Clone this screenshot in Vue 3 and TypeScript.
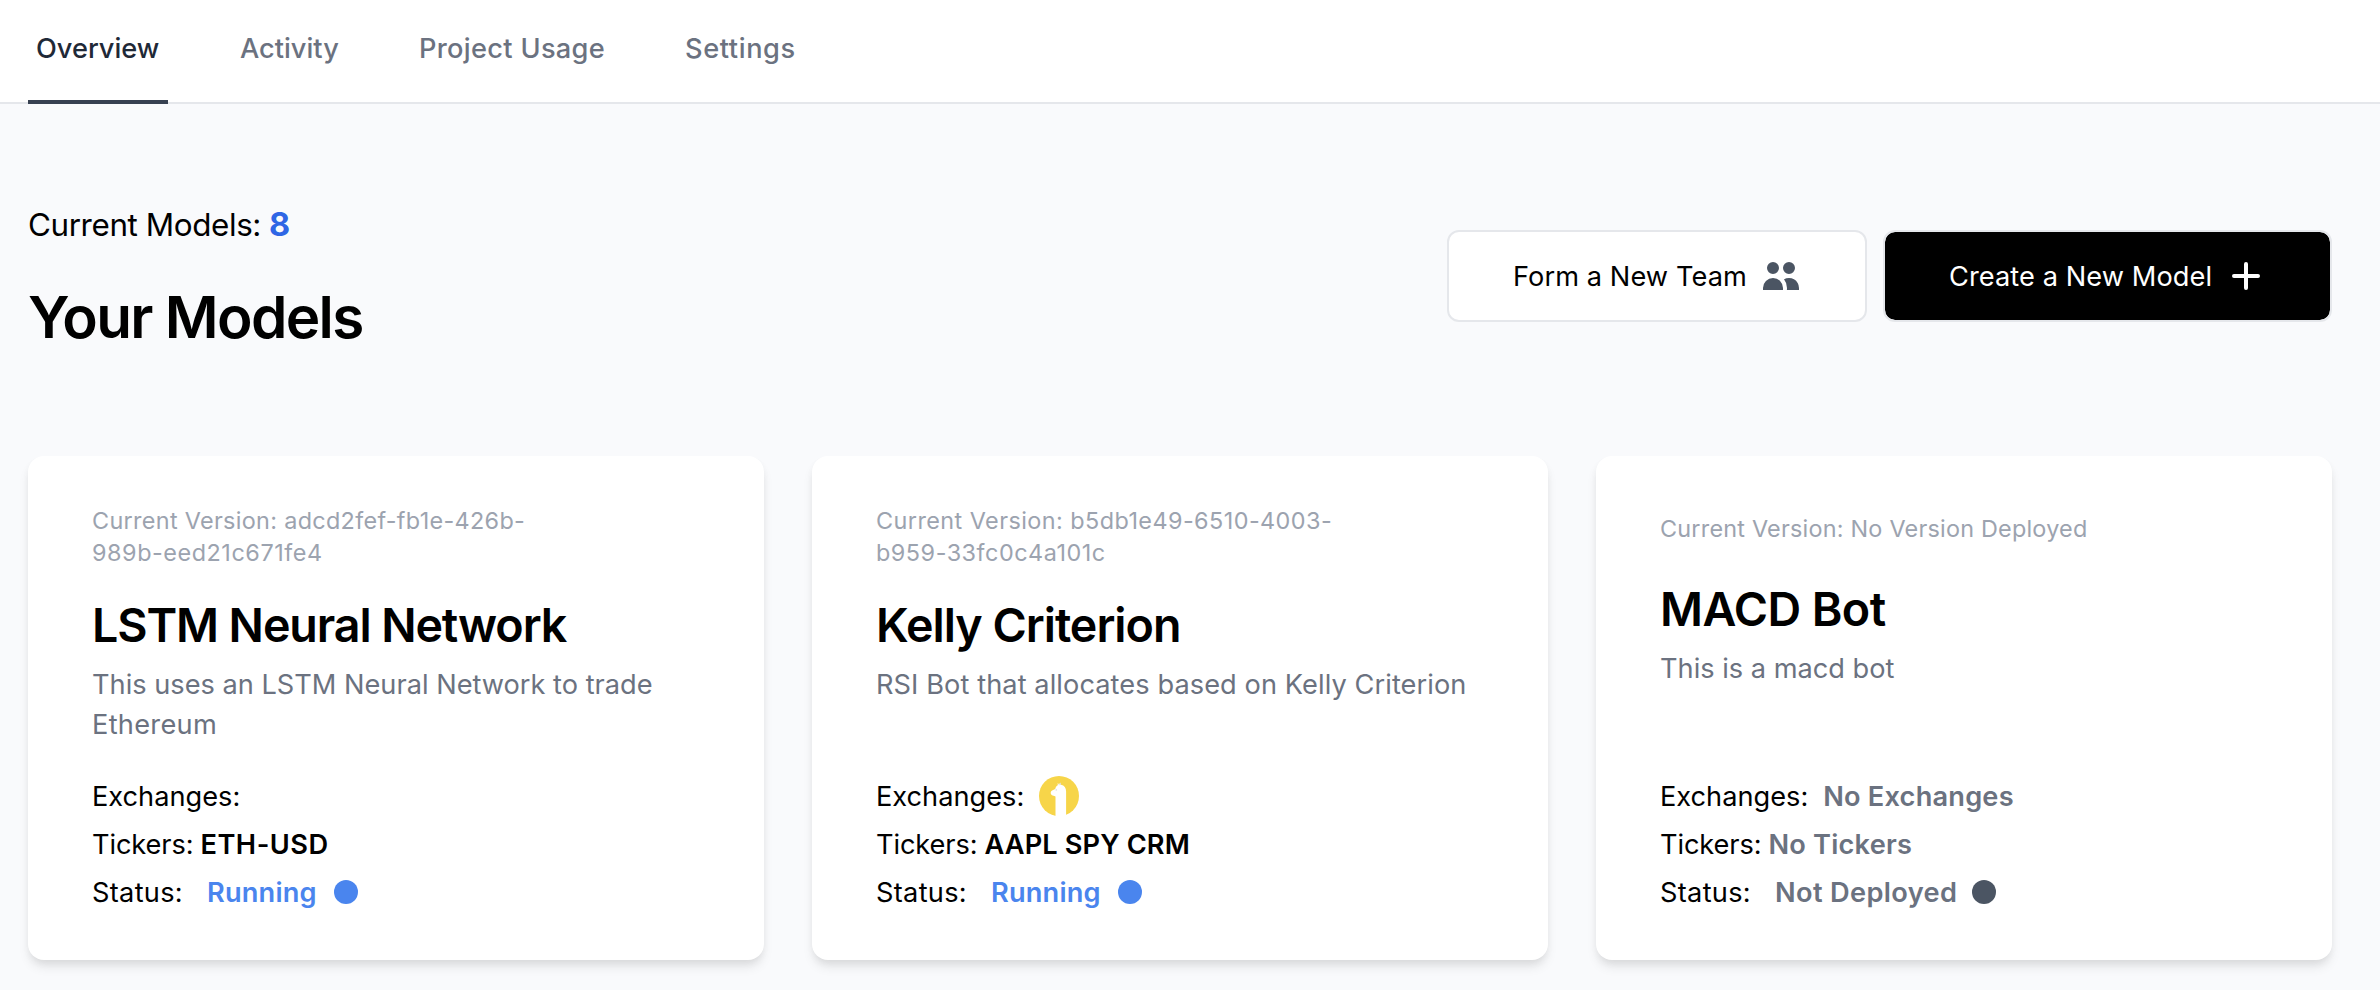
<script setup lang="ts">
interface Tab {
  label: string
  key: string
}

interface Model {
  name: string
  key: string
  version: string[]
  description: string[]
  alpaca?: boolean
  exchanges?: string
  tickers: string
  muted?: boolean
  status: string
}

const tabs: Tab[] = [
  { label: 'Overview', key: 'overview' },
  { label: 'Activity', key: 'activity' },
  { label: 'Project Usage', key: 'usage' },
  { label: 'Settings', key: 'settings' },
]

const models: Model[] = [
  {
    name: 'LSTM Neural Network',
    key: 'lstm',
    version: ['Current Version: adcd2fef-fb1e-426b-', '989b-eed21c671fe4'],
    description: ['This uses an LSTM Neural Network to trade', 'Ethereum'],
    tickers: 'ETH-USD',
    status: 'Running',
  },
  {
    name: 'Kelly Criterion',
    key: 'kelly',
    version: ['Current Version: b5db1e49-6510-4003-', 'b959-33fc0c4a101c'],
    description: ['RSI Bot that allocates based on Kelly Criterion'],
    alpaca: true,
    tickers: 'AAPL SPY CRM',
    status: 'Running',
  },
  {
    name: 'MACD Bot',
    key: 'macd',
    version: ['Current Version: No Version Deployed'],
    description: ['This is a macd bot'],
    exchanges: 'No Exchanges',
    tickers: 'No Tickers',
    muted: true,
    status: 'Not Deployed',
  },
]
</script>

<template>
  <div class="page">
    <nav class="tabs">
      <a v-for="(tab, i) in tabs" :key="tab.key" class="tab" :class="[tab.key, { active: i === 0 }]">{{ tab.label }}</a>
    </nav>

    <main class="content">
      <header class="heading">
        <div>
          <p class="count"><span>Current Models:</span><b>{{ 8 }}</b></p>
          <h1>Your Models</h1>
        </div>
        <div class="actions">
          <button class="btn team">
            <span>Form a New Team</span>
            <svg viewBox="0 0 20 20" fill="currentColor">
              <path d="M9 6a3 3 0 11-6 0 3 3 0 016 0zM17 6a3 3 0 11-6 0 3 3 0 016 0zM12.93 17c.046-.327.07-.66.07-1a6.97 6.97 0 00-1.5-4.33A5 5 0 0119 16v1h-6.07zM6 11a5 5 0 015 5v1H1v-1a5 5 0 015-5z" />
            </svg>
          </button>
          <button class="btn create">
            <span>Create a New Model</span>
            <svg viewBox="0 0 20 20" fill="currentColor">
              <path d="M10 3a1 1 0 011 1v5h5a1 1 0 110 2h-5v5a1 1 0 11-2 0v-5H4a1 1 0 110-2h5V4a1 1 0 011-1z" />
            </svg>
          </button>
        </div>
      </header>

      <section class="cards">
        <article v-for="model in models" :key="model.key" class="card" :class="model.key">
          <div class="version">
            <div v-for="line in model.version" :key="line">{{ line }}</div>
          </div>
          <h2>{{ model.name }}</h2>
          <div class="description">
            <div v-for="line in model.description" :key="line">{{ line }}</div>
          </div>
          <div class="facts">
            <div class="row exchanges">
              <span>Exchanges:</span>
              <svg v-if="model.alpaca" class="alpaca" viewBox="0 0 40 40">
                <circle cx="20" cy="20" r="20" fill="#f7d549" />
                <path
                  d="M16.5 40V20.6C16 20 14.8 20 13.6 19.5C12.2 19 11.6 18 11.7 16.8C11.8 15.4 12.3 14.7 13.6 14.2L16.2 12.9C16.8 10.8 17.6 9.8 18.8 9.2L18.7 7L20.1 8.4L21.2 6.6L22 8.8C25.4 9.4 27.1 12 27.1 15.6V40Z"
                  fill="#fff"
                />
                <circle cx="17.2" cy="13.9" r=".6" fill="#c8c8c8" />
                <path d="M20.1 9.2V7.8M21.5 9V7.2" stroke="#d4d4d4" stroke-width=".7" />
              </svg>
              <strong v-if="model.exchanges" class="muted">{{ model.exchanges }}</strong>
            </div>
            <div class="row tickers">
              <span>Tickers:</span>
              <strong :class="{ muted: model.muted }">{{ model.tickers }}</strong>
            </div>
            <div class="row status">
              <span>Status:</span>
              <strong :class="model.muted ? 'muted' : 'running'">{{ model.status }}</strong>
              <i class="dot" :class="{ off: model.muted }"></i>
            </div>
          </div>
        </article>
      </section>
    </main>
  </div>
</template>

<style>
body {
  background: #f9fafc;
}
</style>

<style scoped>
.page {
  box-sizing: border-box;
  height: 990px;
  overflow: hidden;
  background: #f9fafc;
  color: #000;
  font-family: Inter, sans-serif;
  font-size: 27.2px;
  line-height: 40px;
}

.tabs {
  display: flex;
  box-sizing: border-box;
  height: 104px;
  padding: 0 28px;
  gap: 64px;
  background: #fff;
  box-shadow: inset 0 -2px #e5e7eb;
}

.tab {
  box-sizing: border-box;
  height: 104px;
  padding: 28.5px 8px 0;
  color: #6b7280;
  font-weight: 500;
  white-space: nowrap;
}

.tab.overview {
  width: 140px;
}

.tab.activity {
  width: 115px;
}

.tab.usage {
  width: 202px;
  letter-spacing: 0.32px;
}

.tab.settings {
  letter-spacing: 0.6px;
}

.tab.active {
  color: #1f2937;
  border-bottom: 4px solid #374151;
}

.content {
  padding: 0 48px 0 28px;
}

.heading {
  display: flex;
  justify-content: space-between;
  height: 352px;
}

.count {
  display: flex;
  gap: 8px;
  margin: 101px 0 0;
  font-size: 31.4px;
  line-height: 40px;
  letter-spacing: -0.4px;
}

.count b {
  color: #2f66e5;
  font-size: 32.5px;
  font-weight: 700;
}

h1 {
  margin: 36px 0 0;
  font-size: 58.4px;
  font-weight: 600;
  line-height: 72px;
  letter-spacing: -1.65px;
}

.actions {
  display: flex;
  align-items: flex-start;
  gap: 16px;
  padding-top: 126px;
}

.btn {
  display: flex;
  align-items: center;
  box-sizing: border-box;
  height: 92px;
  padding: 0 0 0 64px;
  border: 2px solid #e5e7eb;
  border-radius: 12px;
  background: #fff;
  color: #000;
  font: inherit;
  letter-spacing: 0.08px;
  text-align: left;
  white-space: nowrap;
}

.btn span {
  flex: none;
  padding-top: 1px;
}

.btn svg {
  width: 40px;
  height: 40px;
  flex: none;
}

.team {
  width: 420px;
}

.team span {
  width: 248px;
}

.team svg {
  color: #4b5563;
}

.create {
  width: 449px;
  background: #000;
  background-clip: padding-box;
  color: #fff;
}

.create span {
  width: 277px;
}

.cards {
  display: grid;
  grid-template-columns: repeat(3, 736px);
  gap: 48px;
}

.card {
  display: flex;
  flex-direction: column;
  box-sizing: border-box;
  height: 504px;
  padding: 40px 64px 44px;
  border-radius: 16px;
  background: #fff;
  box-shadow: 0 8px 12px -2px rgba(0, 0, 0, 0.1), 0 4px 8px -2px rgba(0, 0, 0, 0.06);
  white-space: nowrap;
}

.version {
  display: flex;
  flex-direction: column;
  justify-content: center;
  box-sizing: border-box;
  min-height: 64px;
  padding: 8.5px 0 7.5px;
  color: #9ca3af;
  font-size: 23.4px;
  line-height: 32px;
  letter-spacing: 0.32px;
}

.lstm .version div + div {
  letter-spacing: 0.55px;
}

.kelly .version div {
  letter-spacing: 0.44px;
}

.kelly .version div + div {
  letter-spacing: 0.52px;
}

.macd .version {
  letter-spacing: 0.22px;
}

h2 {
  margin: 17px 0 0;
  font-size: 46.6px;
  font-weight: 600;
  line-height: 64px;
  letter-spacing: -1.1px;
}

.kelly h2 {
  letter-spacing: -1px;
}

.macd h2 {
  letter-spacing: -0.6px;
}

.description {
  margin-top: 7.5px;
  color: #6b7280;
}

.lstm .description div + div {
  letter-spacing: 0.3px;
}

.kelly .description {
  letter-spacing: 0.08px;
}

.facts {
  margin-top: auto;
}

.row {
  display: flex;
  align-items: center;
  box-sizing: border-box;
  height: 48px;
  padding-top: 1px;
}

.exchanges {
  gap: 15px;
}

.tickers {
  gap: 7px;
}

.tickers > span {
  letter-spacing: -0.1px;
}

.status > span {
  width: 115px;
  letter-spacing: 0.3px;
}

.row strong {
  font-weight: 600;
  letter-spacing: 0.2px;
}

.lstm .tickers strong {
  letter-spacing: 0.5px;
}

.kelly .tickers strong {
  letter-spacing: 0.12px;
}

.macd .status strong {
  letter-spacing: 0.36px;
}

.alpaca {
  width: 40px;
  height: 40px;
  margin: -1px 0 0;
}

.muted {
  color: #6b7280;
}

.running {
  color: #4a85ee;
}

.dot {
  width: 24px;
  height: 24px;
  margin: -1px 0 0 17px;
  border-radius: 50%;
  background: #4a85ee;
}

.dot.off {
  margin-left: 15px;
  background: #4b5563;
}
</style>
